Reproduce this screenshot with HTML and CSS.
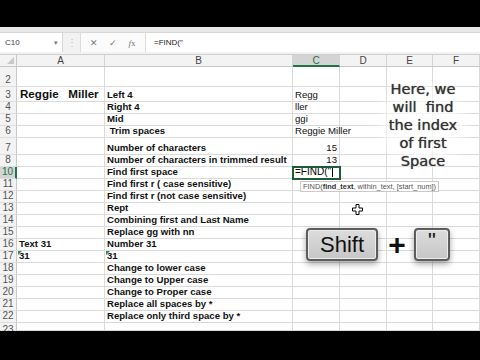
FILE: index.html
```html
<!DOCTYPE html>
<html>
<head>
	<title>FIND first space</title>
	<link rel="stylesheet" href="styles.css">
</head>
<body>
	<div class="bar-top"></div>

	<div class="app">
		<div class="ribbon-edge"></div>

		<div class="formula-bar">
			<div class="name-box"><span>C10</span><span class="drop">&#9662;</span></div>
			<div class="grip">&#8942;</div>
			<div class="actions"><span>&#10005;</span><span>&#10003;</span><span class="fx"><i>f</i>x</span></div>
			<div class="formula">=FIND(&quot;</div>
		</div>
		<div class="gap"></div>

		<div class="sheet">
			<div class="row head">
				<div class="rh corner"><span class="tri"></span></div>
				<div class="ch a">A</div>
				<div class="ch b">B</div>
				<div class="ch c sel">C</div>
				<div class="ch d">D</div>
				<div class="ch e">E</div>
				<div class="ch f">F</div>
			</div>
			<div class="row h20">
				<div class="rh">2</div>
				<div class="cell a"></div><div class="cell b"></div><div class="cell c"></div><div class="cell d"></div><div class="cell e"></div><div class="cell f"></div>
			</div>
			<div class="row h15">
				<div class="rh">3</div>
				<div class="cell a bold big">Reggie&nbsp;&nbsp;&nbsp;Miller</div><div class="cell b bold">Left 4</div><div class="cell c">Regg</div><div class="cell d"></div><div class="cell e"></div><div class="cell f"></div>
			</div>
			<div class="row">
				<div class="rh">4</div>
				<div class="cell a"></div><div class="cell b bold">Right 4</div><div class="cell c">ller</div><div class="cell d"></div><div class="cell e"></div><div class="cell f"></div>
			</div>
			<div class="row">
				<div class="rh">5</div>
				<div class="cell a"></div><div class="cell b bold">Mid</div><div class="cell c">ggi</div><div class="cell d"></div><div class="cell e"></div><div class="cell f"></div>
			</div>
			<div class="row">
				<div class="rh">6</div>
				<div class="cell a"></div><div class="cell b bold">&nbsp;Trim spaces</div><div class="cell c">Reggie Miller</div><div class="cell d"></div><div class="cell e"></div><div class="cell f"></div>
			</div>
			<div class="row h17">
				<div class="rh">7</div>
				<div class="cell a"></div><div class="cell b bold">Number of characters</div><div class="cell c num">15</div><div class="cell d"></div><div class="cell e"></div><div class="cell f"></div>
			</div>
			<div class="row">
				<div class="rh">8</div>
				<div class="cell a"></div><div class="cell b bold">Number of characters in trimmed result</div><div class="cell c num">13</div><div class="cell d"></div><div class="cell e"></div><div class="cell f"></div>
			</div>
			<div class="row">
				<div class="rh sel">10</div>
				<div class="cell a"></div><div class="cell b bold">Find first space</div><div class="cell c active">=FIND(&quot;<span class="caret"></span></div><div class="cell d"></div><div class="cell e"></div><div class="cell f"></div>
			</div>
			<div class="row">
				<div class="rh">11</div>
				<div class="cell a"></div><div class="cell b bold">Find first r ( case sensitive)</div><div class="cell c"></div><div class="cell d"></div><div class="cell e"></div><div class="cell f"></div>
			</div>
			<div class="row">
				<div class="rh">12</div>
				<div class="cell a"></div><div class="cell b bold">Find first r (not case sensitive)</div><div class="cell c"></div><div class="cell d"></div><div class="cell e"></div><div class="cell f"></div>
			</div>
			<div class="row">
				<div class="rh">13</div>
				<div class="cell a"></div><div class="cell b bold">Rept</div><div class="cell c"></div><div class="cell d"></div><div class="cell e"></div><div class="cell f"></div>
			</div>
			<div class="row">
				<div class="rh">14</div>
				<div class="cell a"></div><div class="cell b bold">Combining first and Last Name</div><div class="cell c"></div><div class="cell d"></div><div class="cell e"></div><div class="cell f"></div>
			</div>
			<div class="row">
				<div class="rh">15</div>
				<div class="cell a"></div><div class="cell b bold">Replace gg with nn</div><div class="cell c"></div><div class="cell d"></div><div class="cell e"></div><div class="cell f"></div>
			</div>
			<div class="row">
				<div class="rh">16</div>
				<div class="cell a bold">Text 31</div><div class="cell b bold">Number 31</div><div class="cell c"></div><div class="cell d"></div><div class="cell e"></div><div class="cell f"></div>
			</div>
			<div class="row">
				<div class="rh">17</div>
				<div class="cell a bold flag">31</div><div class="cell b bold flag">31</div><div class="cell c"></div><div class="cell d"></div><div class="cell e"></div><div class="cell f"></div>
			</div>
			<div class="row">
				<div class="rh">18</div>
				<div class="cell a"></div><div class="cell b bold">Change to lower case</div><div class="cell c"></div><div class="cell d"></div><div class="cell e"></div><div class="cell f"></div>
			</div>
			<div class="row">
				<div class="rh">19</div>
				<div class="cell a"></div><div class="cell b bold">Change to Upper case</div><div class="cell c"></div><div class="cell d"></div><div class="cell e"></div><div class="cell f"></div>
			</div>
			<div class="row">
				<div class="rh">20</div>
				<div class="cell a"></div><div class="cell b bold">Change to Proper case</div><div class="cell c"></div><div class="cell d"></div><div class="cell e"></div><div class="cell f"></div>
			</div>
			<div class="row">
				<div class="rh">21</div>
				<div class="cell a"></div><div class="cell b bold">Replace all spaces by *</div><div class="cell c"></div><div class="cell d"></div><div class="cell e"></div><div class="cell f"></div>
			</div>
			<div class="row">
				<div class="rh">22</div>
				<div class="cell a"></div><div class="cell b bold">Replace only third space by *</div><div class="cell c"></div><div class="cell d"></div><div class="cell e"></div><div class="cell f"></div>
			</div>
			<div class="row last">
				<div class="rh">23</div>
				<div class="cell a"></div><div class="cell b"></div><div class="cell c"></div><div class="cell d"></div><div class="cell e"></div><div class="cell f"></div>
			</div>
		</div>

		<!-- things drawn over the sheet -->
		<div class="tooltip">FIND(<b>find_text</b>, within_text, [start_num])</div>

		<div class="note">
			<p>Here, we</p>
			<p>will&nbsp; find</p>
			<p>the index</p>
			<p>of first</p>
			<p>Space</p>
		</div>

		<svg class="cursor" width="11" height="11" viewBox="0 0 11 11">
			<path d="M4 0.5h3v3.5h3.5v3h-3.5v3.5h-3v-3.5h-3.5v-3h3.5z" fill="#fff" stroke="#000" stroke-width="1"/>
		</svg>

		<div class="keys">
			<div class="key shift">Shift</div>
			<div class="plus">+</div>
			<div class="key quote">&quot;</div>
		</div>
	</div>

	<div class="bar-bottom"></div>
</body>
</html>
```

FILE: styles.css
```css
* {
	margin: 0;
	padding: 0;
	box-sizing: border-box;
}

body {
	width: 480px;
	height: 360px;
	overflow: hidden;
	background: #000;
	font-family: "Liberation Sans", Arial, sans-serif;
}

.bar-top {
	height: 27px;
}

.app {
	position: relative;
	height: 304px;
	overflow: hidden;
	background: #fff;
}

/* ribbon + formula bar */

.ribbon-edge {
	height: 6px;
	background: #e8e8e8;
	border-bottom: 1px solid #d8d8d8;
}

.formula-bar {
	height: 19px;
	display: flex;
	background: #f2f2f2;
}

.name-box {
	width: 63px;
	display: flex;
	align-items: center;
	justify-content: space-between;
	padding: 0 4px 0 5px;
	background: #fff;
	border-right: 1px solid #d6d6d6;
	font-size: 8px;
	color: #444;
}

.drop {
	font-size: 7px;
	color: #777;
}

.grip {
	width: 17px;
	display: flex;
	align-items: center;
	justify-content: center;
	font-size: 10px;
	color: #bbb;
}

.actions {
	width: 66px;
	display: flex;
	align-items: center;
	justify-content: space-around;
	padding: 0 4px;
	background: #fbfbfb;
	border-left: 1px solid #dcdcdc;
	border-right: 1px solid #dcdcdc;
	font-size: 9px;
	color: #777;
}

.fx {
	font-family: "Liberation Serif", serif;
	font-size: 9px;
}

.formula {
	flex: 1;
	display: flex;
	align-items: center;
	padding-left: 8px;
	background: #fff;
	font-size: 8px;
	color: #222;
}

.gap {
	height: 3px;
	background: #f2f2f2;
	border-bottom: 1px solid #cfcfcf;
}

/* grid */

.row {
	display: flex;
	height: 12px;
}

.row.head { height: 12px; }
.row.h20 { height: 20px; }
.row.h15 { height: 15px; }
.row.h17 { height: 17px; }
.row.last { height: 8px; overflow: hidden; }

.rh {
	width: 17px;
	flex: none;
	display: flex;
	align-items: flex-end;
	justify-content: center;
	padding-bottom: 1px;
	background: #f3f3f3;
	border-right: 1px solid #c9c9c9;
	border-bottom: 1px solid #dedede;
	font-size: 10px;
	line-height: 11px;
	color: #555;
}

.last .rh {
	align-items: flex-start;
	padding: 1px 0 0 0;
}

.rh.sel {
	background: #d4d4d4;
	border-right: 2px solid #217346;
	color: #217346;
}

.corner {
	position: relative;
	border-bottom: 1px solid #c9c9c9;
}

.tri {
	position: absolute;
	right: 2px;
	bottom: 2px;
	border-left: 7px solid transparent;
	border-bottom: 7px solid #c8c8c8;
}

.a { width: 88px; }
.b { width: 188px; }
.c { width: 47px; }
.d { width: 47px; }
.e { width: 46px; }
.f { width: 47px; }

.ch {
	flex: none;
	display: flex;
	align-items: center;
	justify-content: center;
	background: #f3f3f3;
	border-right: 1px solid #d3d3d3;
	border-bottom: 1px solid #c9c9c9;
	font-size: 10px;
	color: #444;
}

.ch.sel {
	background: #d4d4d4;
	border-bottom: 2px solid #217346;
	color: #217346;
}

.cell {
	flex: none;
	display: flex;
	align-items: flex-end;
	padding: 0 2px 1px 2px;
	border-right: 1px solid #dadada;
	border-bottom: 1px solid #dadada;
	white-space: nowrap;
	font-size: 9.6px;
	line-height: 11px;
	color: #111;
}

.bold {
	font-weight: bold;
}

.big {
	font-size: 11.6px;
	padding-bottom: 2px;
	padding-left: 3px;
}

.num {
	justify-content: flex-end;
}

.flag {
	position: relative;
}

.flag::before {
	content: "";
	position: absolute;
	left: 1px;
	top: 0;
	border-top: 4px solid #2e8b57;
	border-right: 4px solid transparent;
}

.active {
	position: relative;
	z-index: 1;
	outline: 2px solid #1d5c38;
	outline-offset: -1px;
	font-size: 10px;
	color: #000;
}

.caret {
	display: inline-block;
	width: 1px;
	height: 10px;
	margin-left: 1px;
	background: #000;
}

/* overlays */

.tooltip {
	position: absolute;
	left: 300px;
	top: 154px;
	height: 11px;
	padding: 0 2px;
	display: flex;
	align-items: center;
	background: #fff;
	border: 1px solid #c9c9c9;
	font-size: 7.4px;
	color: #555;
	white-space: nowrap;
}

.tooltip b {
	color: #333;
}

.note {
	position: absolute;
	left: 372px;
	top: 51px;
	width: 102px;
	padding: 2px 0;
	text-align: center;
	font-family: "DejaVu Sans", sans-serif;
	font-size: 14.6px;
	line-height: 18px;
	color: #333;
	background: radial-gradient(closest-side, rgba(255,255,255,0.85), rgba(255,255,255,0.6) 70%, rgba(255,255,255,0));
	text-shadow: 0 0 1px #555, 0 0 3px #fff, 0 0 6px #fff;
}

.cursor {
	position: absolute;
	left: 352px;
	top: 177px;
}

.keys {
	position: absolute;
	left: 306px;
	top: 201px;
	display: flex;
	align-items: center;
}

.key {
	height: 33px;
	display: flex;
	align-items: center;
	justify-content: center;
	background: linear-gradient(#dcdcdc, #c6c6c6);
	border: 2px solid #5c5c5c;
	border-radius: 4px;
	box-shadow: inset 0 0 0 1px #ececec, 0 3px 6px rgba(0,0,0,0.35);
	font-family: "Liberation Sans", Arial, sans-serif;
	font-size: 22px;
	color: #111;
}

.shift {
	width: 72px;
}

.quote {
	width: 36px;
	padding-bottom: 8px;
}

.plus {
	width: 22px;
	margin: 0 6px 0 8px;
	text-align: center;
	font-size: 30px;
	font-weight: bold;
	line-height: 30px;
	color: #111;
}

.bar-bottom {
	height: 29px;
}
```
